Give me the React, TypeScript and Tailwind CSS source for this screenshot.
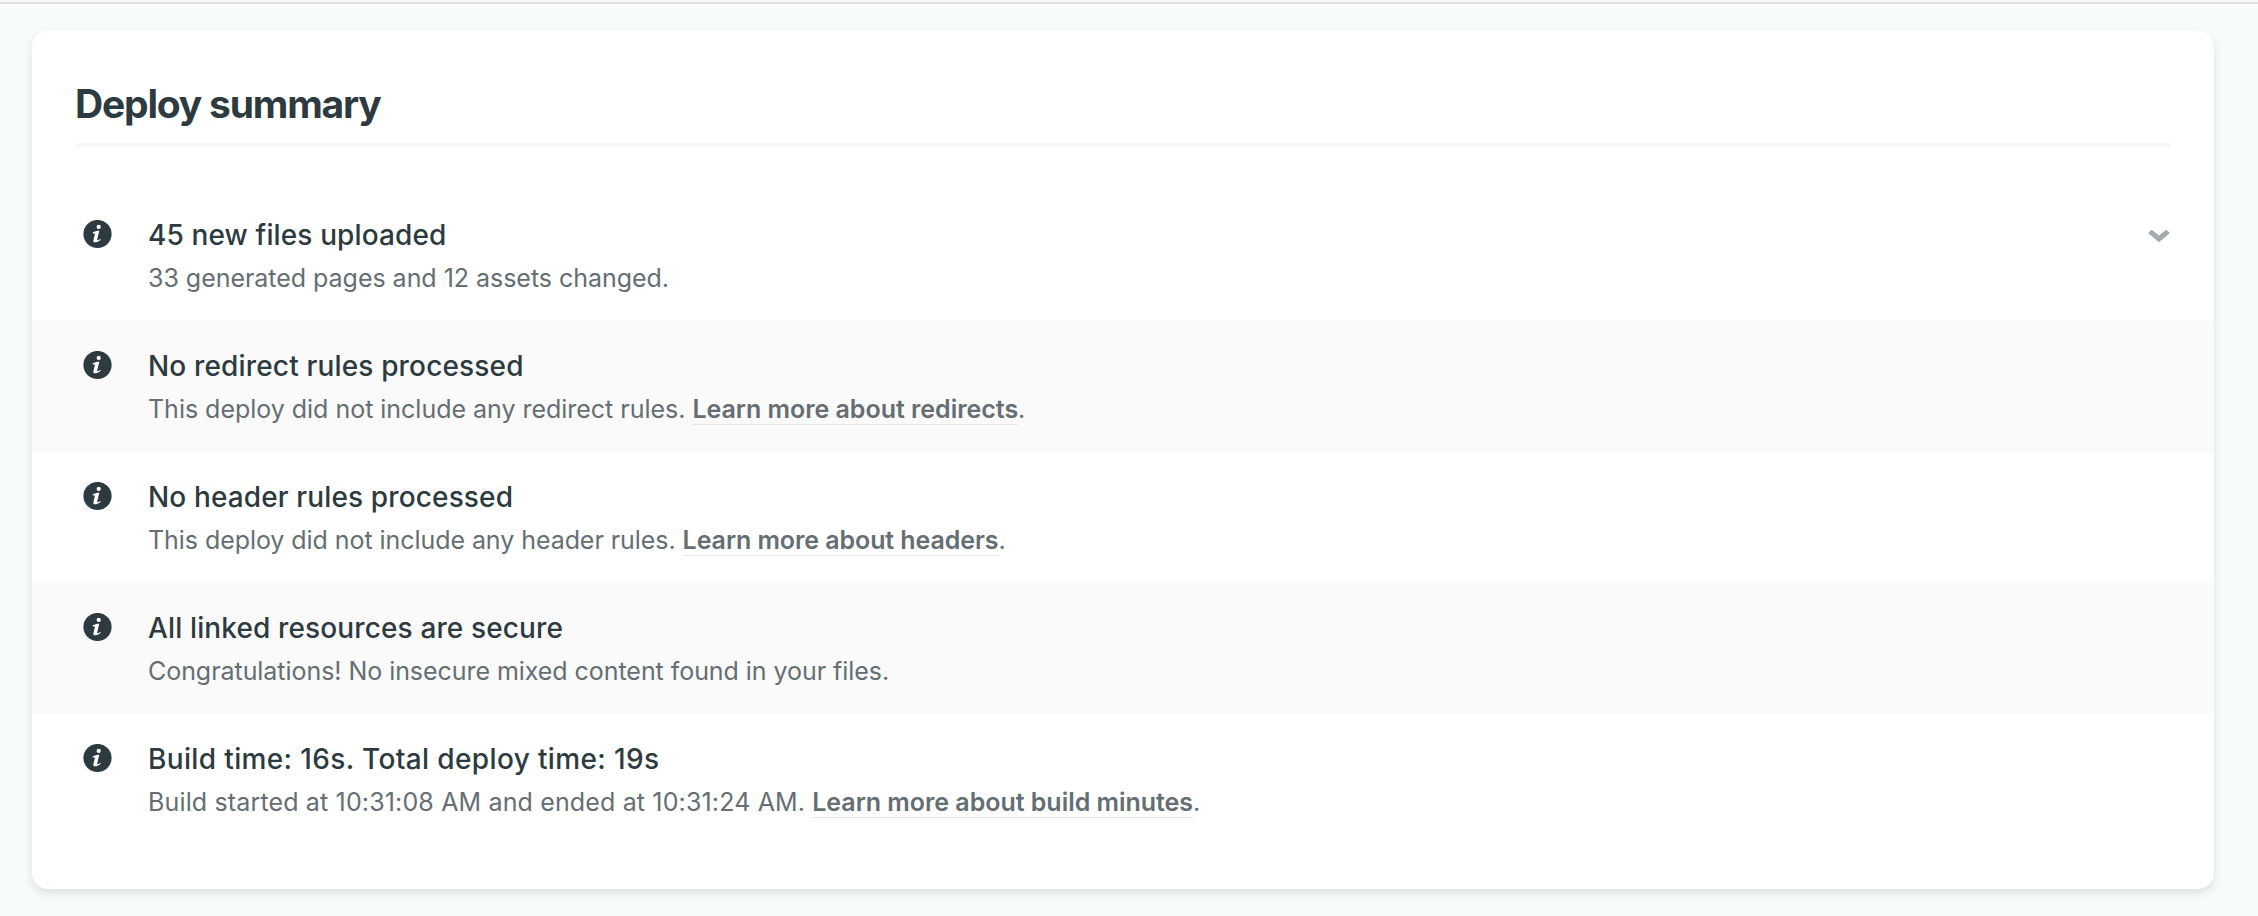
import React from "react";

type Item = {
  title: string;
  titleClass: string;
  text: string;
  textClass: string;
  link?: string;
  linkClass?: string;
  expandable?: boolean;
};

const items: Item[] = [
  {
    title: "45 new files uploaded",
    titleClass: "tracking-[0.13px]",
    text: "33 generated pages and 12 assets changed.",
    textClass: "tracking-[-0.03px]",
    expandable: true,
  },
  {
    title: "No redirect rules processed",
    titleClass: "tracking-[0.16px]",
    text: "This deploy did not include any redirect rules.",
    textClass: "tracking-[-0.02px]",
    link: "Learn more about redirects",
    linkClass: "tracking-[-0.03px]",
  },
  {
    title: "No header rules processed",
    titleClass: "tracking-[0.13px]",
    text: "This deploy did not include any header rules.",
    textClass: "tracking-[-0.06px]",
    link: "Learn more about headers",
    linkClass: "tracking-[-0.08px]",
  },
  {
    title: "All linked resources are secure",
    titleClass: "tracking-[0.13px]",
    text: "Congratulations! No insecure mixed content found in your files.",
    textClass: "tracking-[-0.05px]",
  },
  {
    title: "Build time: 16s. Total deploy time: 19s",
    titleClass: "tracking-[0.36px]",
    text: "Build started at 10:31:08 AM and ended at 10:31:24 AM.",
    textClass: "tracking-[0.15px]",
    link: "Learn more about build minutes",
    linkClass: "tracking-[-0.03px]",
  },
];

function InfoIcon() {
  return (
    <svg className="mt-[30px] ml-[51px] h-[29px] w-[29px] shrink-0" viewBox="0 0 29 29">
      <circle cx="14.5" cy="14" r="14.1" fill="#2d3b41" />
      <circle cx="15.7" cy="6.9" r="2.1" fill="#fff" />
      <path
        d="M9.6 12.6C11.6 11.4 13.8 10.8 16.3 10.8L14.2 19.6C14 20.5 14.5 20.5 17.4 18.9L17.7 19.7C15.4 21.6 13.6 22.3 12 22.3C10.5 22.3 10.1 21.3 10.5 19.7L12 13.4L9.9 13.5Z"
        fill="#fff"
      />
    </svg>
  );
}

function Chevron() {
  return (
    <svg className="mt-[39px] mr-[44px] ml-auto h-[14px] w-[22px]" viewBox="0 0 22 14">
      <path d="M0 4L3.7 0.7L11 6.4L18.3 0.7L22 4L11 13.2Z" fill="#a3abaf" />
    </svg>
  );
}

function Row({ item }: { item: Item }) {
  return (
    <li className="flex h-[131px] items-start even:bg-[#fafafa]">
      <InfoIcon />
      <div className="ml-[36px] pt-[25px] whitespace-nowrap">
        <h3 className="text-[28px] leading-[40px] font-medium text-[#2d3b41]">
          <span className={item.titleClass}>{item.title}</span>
        </h3>
        <p className="mt-[3px] text-[25px] leading-[40px] text-[#646e73]">
          <span className={item.textClass}>{item.text}</span>
          {item.link && (
            <>
              {" "}
              <a href="#" className={`border-b border-[#e4e6e7] font-semibold ${item.linkClass}`}>
                {item.link}
              </a>
              .
            </>
          )}
        </p>
      </div>
      {item.expandable && <Chevron />}
    </li>
  );
}

export default function App() {
  return (
    <div className="h-[916px] overflow-hidden bg-[#f7fbfc] font-['Inter',sans-serif]">
      <div className="h-[4px] border-b-2 border-[#e0e1e1] bg-[#f8f8f8]" />
      <section className="mt-[26px] mr-[44px] ml-[32px] h-[859px] rounded-[16px] bg-white pt-[50px] shadow-[0_4px_8px_rgba(14,30,37,0.12)]">
        <header className="mx-[44px] h-[67px] border-b-4 border-[#f5f6f6]">
          <h2 className="-ml-px text-[39px] leading-[48px] font-bold text-[#2d3b41]">
            <span className="tracking-[-1.2px]">Deploy summary</span>
          </h2>
        </header>
        <ul className="mt-[43px]">
          {items.map((item) => (
            <Row key={item.title} item={item} />
          ))}
        </ul>
      </section>
    </div>
  );
}
